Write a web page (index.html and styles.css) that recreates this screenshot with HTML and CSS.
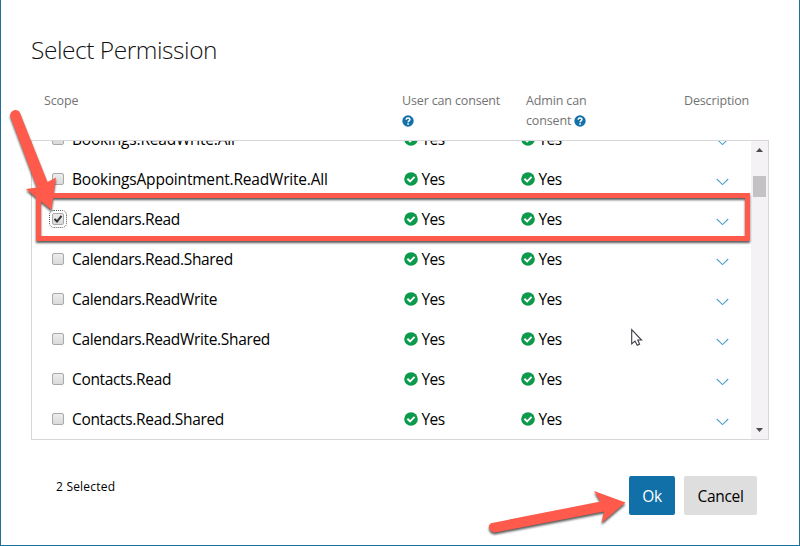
FILE: index.html
```
<!DOCTYPE html>
<html lang="en">
<head>
<meta charset="utf-8">
<title>Select Permission</title>
<link rel="stylesheet" href="styles.css">
</head>
<body>
<svg width="0" height="0" class="defs" aria-hidden="true">
  <symbol id="yes" viewBox="0 0 14 14"><circle cx="7" cy="7" r="6.8" fill="#0b9a4b"/><path d="M3.4 6.8 6.1 9.4 10.6 4.9" fill="none" stroke="#fff" stroke-width="2"/></symbol>
  <symbol id="help" viewBox="0 0 12 12"><circle cx="6" cy="6" r="5.7" fill="#1470a8"/><path d="M4.1 4.7C4.2 2.4 7.9 2.5 7.9 4.6 7.9 6 6.1 5.8 6.1 7.3" fill="none" stroke="#fff" stroke-width="1.5"/><path d="M5.3 8.2h1.6v1.5H5.3z" fill="#fff"/></symbol>
  <symbol id="down" viewBox="0 0 13 8"><path d="M.8 1 6.5 6.6 12.2 1" fill="none" stroke="#4f9fcb" stroke-width="1.1"/></symbol>
</svg>
<main class="dialog">
  <h1>Select Permission</h1>
  <div class="head">
    <span>Scope</span>
    <span>User can consent<br><svg class="help"><use href="#help"/></svg></span>
    <span>Admin can<br>consent <svg class="help"><use href="#help"/></svg></span>
    <span>Description</span>
  </div>
  <div class="list">
    <div class="rows" id="rows"></div>
    <div class="scrollbar">
      <svg class="arrow" viewBox="0 0 7 4"><path d="M0 4 3.5 0 7 4z"/></svg>
      <div class="thumb"></div>
      <svg class="arrow last" viewBox="0 0 7 4"><path d="M0 0h7L3.5 4z"/></svg>
    </div>
  </div>
  <footer>
    <span class="count">2 Selected</span>
    <button class="ok">Ok</button>
    <button class="cancel">Cancel</button>
  </footer>
</main>
<svg class="notes" viewBox="0 0 800 546">
  <g class="shadow">
    <rect x="38.5" y="195.5" width="709" height="43" fill="none" stroke="#ff5a4b" stroke-width="5"/>
    <path d="M10.5 117C8.5 111 17.5 107 20 113L47.5 182 56 177.500 51.500 210 26 189 37 187.500z" fill="#ff5a4b"/>
    <path d="M492 523C487 524 488 532 495 532.500L604 511.500 601.500 523 625.500 502.500 594 491 600.500 501.500z" fill="#ff5a4b"/>
  </g>
  <path d="M631.700 329.700V343.800L635 341 637.200 345.300 639.600 344.200 637.800 340H641.500z" fill="#fff" stroke="#3d3b45" stroke-width="1.100"/>
</svg>
<script src="app.js"></script>
</body>
</html>
```
FILE: styles.css
```
* { box-sizing: border-box; }
body { margin: 0; background: #fff; color: #000; font-family: "Open Sans", "Noto Sans", sans-serif; }
.defs { position: absolute; }
.dialog {
  width: 800px; height: 546px; padding: 32px 30px 0 30px; overflow: hidden;
  border: 1px solid #1b70a0; border-top: 0;
}
h1 { margin: 0; height: 36px; font-size: 24.5px; line-height: 36px; font-weight: 300; letter-spacing: -0.45px; color: #111; }
.head {
  display: grid; grid-template-columns: 358px 124px 158px 80px; height: 72px; padding: 23px 0 0 13px;
  font-size: 12.5px; line-height: 20px; letter-spacing: -0.15px; color: #737373;
}
.help { width: 12px; height: 12px; vertical-align: -2px; }
.list { display: flex; width: 738px; height: 300px; border: 1px solid #d8d6da; overflow: hidden; }
.rows { flex: 1; margin-top: -22px; }
.row {
  display: grid; grid-template-columns: 20px 331.5px 117px 195px 13px; align-items: center; height: 40px; padding-left: 20px;
  font-size: 15.5px; line-height: 20px; letter-spacing: -0.34px; white-space: nowrap;
}
.row.loose { letter-spacing: -0.19px; }
.box {
  width: 12px; height: 12px; border: 1px solid #a9a9a9; border-radius: 2px;
  background: linear-gradient(#ececec, #dadada);
}
.box.checked { outline: 1px dotted #555; outline-offset: 2px; }
.box svg { display: block; width: 10px; height: 10px; }
.yes { display: flex; align-items: center; gap: 4px; letter-spacing: -0.6px; }
.yes svg { width: 14px; height: 14px; }
.down { width: 13px; height: 8px; margin-top: 5px; }
.scrollbar { display: flex; flex-direction: column; align-items: center; width: 17px; padding: 7px 0; background: #f5f2f6; }
.arrow { width: 7px; height: 4px; fill: #4d4b50; }
.arrow.last { margin-top: auto; }
.thumb { width: 13px; height: 21px; margin-top: 24px; background: #c4c2c5; }
footer { display: flex; align-items: flex-start; padding: 36px 0 0 25px; }
.count { width: 573px; padding-top: 1px; font-size: 12px; line-height: 20px; letter-spacing: 0.2px; }
button {
  height: 39px; margin: 0; padding: 1px 0 0; border: 0; border-radius: 2px; font: 15.5px/38px "Open Sans", "Noto Sans", sans-serif;
  letter-spacing: -0.3px; color: #000;
}
.ok { width: 46px; margin-right: 9px; background: #1170a8; color: #fff; }
.cancel { width: 73px; background: #dedede; }
.notes { position: absolute; left: 0; top: 0; width: 800px; height: 546px; pointer-events: none; }
.shadow { filter: drop-shadow(.5px 2px .8px rgba(0, 0, 0, .65)); }
```
FILE: app.js
```
const scopes = [
  "Bookings.ReadWrite.All", "BookingsAppointment.ReadWrite.All", "Calendars.Read", "Calendars.Read.Shared",
  "Calendars.ReadWrite", "Calendars.ReadWrite.Shared", "Contacts.Read", "Contacts.Read.Shared"
];
const tick = '<svg viewBox="0 0 10 10"><path d="M1.500 5 4 7.500 8.500 1.800" fill="none" stroke="#333" stroke-width="2"/></svg>';
const yes = '<span class="yes"><svg><use href="#yes"/></svg>Yes</span>';
document.getElementById("rows").innerHTML = scopes.map(name => {
  const on = name === "Calendars.Read";
  const loose = name.startsWith("Bookings");
  return `<div class="row${loose ? " loose" : ""}"><span class="box${on ? " checked" : ""}">${on ? tick : ""}</span><span>${name}</span>${yes}${yes}<svg class="down"><use href="#down"/></svg></div>`;
}).join("");
```
